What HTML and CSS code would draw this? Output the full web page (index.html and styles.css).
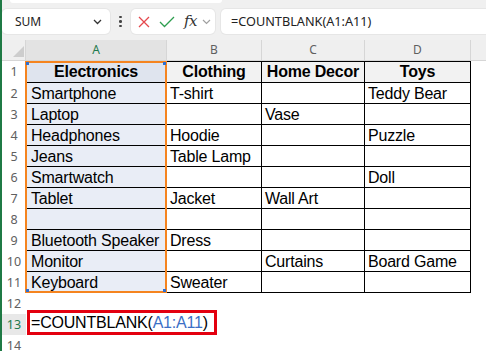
FILE: index.html
```html
<!DOCTYPE html>
<html>
<head>
<meta charset="utf-8">
<link rel="stylesheet" href="styles.css">
</head>
<body>
<div class="app">
  <div class="toolbar">
    <div class="ribbon-edge"></div>
    <div class="fbar">
      <div class="namebox">
        <span class="nb-text">SUM</span>
        <svg class="chev" width="9" height="6" viewBox="0 0 9 6"><path d="M1 1 L4.5 4.5 L8 1" fill="none" stroke="#333" stroke-width="1.3"/></svg>
      </div>
      <div class="dots"><i></i><i></i><i></i></div>
      <div class="fxbox">
        <svg class="ic-x" width="12" height="12" viewBox="0 0 12 12"><path d="M1 1 L11 11 M11 1 L1 11" stroke="#e5484d" stroke-width="1.3" fill="none"/></svg>
        <svg class="ic-ok" width="16" height="12" viewBox="0 0 16 12"><path d="M1 6 L5.5 10.5 L15 1" stroke="#2e9e4f" stroke-width="1.3" fill="none"/></svg>
        <span class="fx">fx</span>
        <svg class="chev2" width="9" height="6" viewBox="0 0 9 6"><path d="M1 1 L4.5 4.5 L8 1" fill="none" stroke="#a0a0a0" stroke-width="1.2"/></svg>
      </div>
      <div class="formula">=COUNTBLANK(A1:A11)</div>
    </div>
  </div>

  <div class="sheet">
    <div class="corner"><svg width="24" height="21" viewBox="0 0 24 21"><path d="M11 17 L22 17 L22 6 Z" fill="#cdcdcd"/></svg></div>
    <div class="ch active">A</div>
    <div class="ch">B</div>
    <div class="ch">C</div>
    <div class="ch">D</div>
    <div class="ch rest"></div>

    <div class="rh">1</div>
    <div class="c a r1">Electronics</div>
    <div class="c r1">Clothing</div>
    <div class="c r1">Home Decor</div>
    <div class="c r1">Toys</div>
    <div class="e"></div>

    <div class="rh">2</div>
    <div class="c a">Smartphone</div>
    <div class="c">T-shirt</div>
    <div class="c"></div>
    <div class="c">Teddy Bear</div>
    <div class="e"></div>

    <div class="rh">3</div>
    <div class="c a">Laptop</div>
    <div class="c"></div>
    <div class="c">Vase</div>
    <div class="c"></div>
    <div class="e"></div>

    <div class="rh">4</div>
    <div class="c a">Headphones</div>
    <div class="c">Hoodie</div>
    <div class="c"></div>
    <div class="c">Puzzle</div>
    <div class="e"></div>

    <div class="rh">5</div>
    <div class="c a">Jeans</div>
    <div class="c">Table Lamp</div>
    <div class="c"></div>
    <div class="c"></div>
    <div class="e"></div>

    <div class="rh">6</div>
    <div class="c a">Smartwatch</div>
    <div class="c"></div>
    <div class="c"></div>
    <div class="c">Doll</div>
    <div class="e"></div>

    <div class="rh">7</div>
    <div class="c a">Tablet</div>
    <div class="c">Jacket</div>
    <div class="c">Wall Art</div>
    <div class="c"></div>
    <div class="e"></div>

    <div class="rh">8</div>
    <div class="c a"></div>
    <div class="c"></div>
    <div class="c"></div>
    <div class="c"></div>
    <div class="e"></div>

    <div class="rh">9</div>
    <div class="c a">Bluetooth Speaker</div>
    <div class="c">Dress</div>
    <div class="c"></div>
    <div class="c"></div>
    <div class="e"></div>

    <div class="rh">10</div>
    <div class="c a">Monitor</div>
    <div class="c"></div>
    <div class="c">Curtains</div>
    <div class="c">Board Game</div>
    <div class="e"></div>

    <div class="rh">11</div>
    <div class="c a">Keyboard</div>
    <div class="c">Sweater</div>
    <div class="c"></div>
    <div class="c"></div>
    <div class="e"></div>

    <div class="rh">12</div>
    <div class="e"></div><div class="e"></div><div class="e"></div><div class="e"></div><div class="e"></div>

    <div class="rh active">13</div>
    <div class="e a13"><span class="editbox">=COUNTBLANK(<span class="ref">A1:A11</span>)</span></div>
    <div class="e"></div><div class="e"></div><div class="e"></div><div class="e"></div>

    <div class="rh">14</div>
    <div class="e"></div><div class="e"></div><div class="e"></div><div class="e"></div><div class="e"></div>

    <div class="sel"><i class="h tl"></i><i class="h tr"></i><i class="h bl"></i><i class="h br"></i></div>
  </div>
</div>
</body>
</html>
```

FILE: styles.css
```css
* { box-sizing: border-box; }
html, body { margin: 0; padding: 0; background: #fff; }
body { width: 486px; height: 351px; overflow: hidden; }

.app {
  border-left: 2px solid #1f7a45;
  height: 351px;
  overflow: hidden;
}

.toolbar {
  height: 40px;
  background: #f0f0f0;
  font-family: "Noto Sans", "Open Sans", sans-serif;
}
.ribbon-edge {
  height: 3px;
  width: 212px;
  margin-left: 8px;
  background: #fff;
  border-radius: 0 0 6px 6px;
}
.fbar {
  display: flex;
  align-items: center;
  height: 25px;
  margin-top: 6px;
}
.namebox {
  width: 108px;
  height: 25px;
  background: #fff;
  border-radius: 5px;
  box-shadow: 0 0 0 1px #e6e6e6;
  display: flex;
  align-items: center;
  padding-left: 13px;
  padding-right: 8px;
}
.nb-text { flex: 1; font-size: 12px; color: #222; }
.chev { display: block; }

.dots {
  margin-left: 9px;
  width: 3px;
  display: flex;
  flex-direction: column;
  gap: 2px;
}
.dots i { display: block; width: 2.5px; height: 2.5px; background: #444; border-radius: 50%; }

.fxbox {
  margin-left: 9px;
  width: 84px;
  height: 25px;
  background: #fff;
  border-radius: 5px;
  box-shadow: 0 0 0 1px #e6e6e6;
  display: flex;
  align-items: center;
  padding-left: 7px;
}
.ic-x { display: block; }
.ic-ok { display: block; margin-left: 9px; }
.fx {
  margin-left: 9px;
  font-family: "DejaVu Serif", "Liberation Serif", serif;
  font-style: italic;
  font-size: 15px;
  color: #333;
  line-height: 1;
  letter-spacing: -0.5px;
}
.chev2 { display: block; margin-left: 5px; }

.formula {
  flex: 1;
  margin-left: 6px;
  height: 25px;
  background: #fff;
  border-radius: 5px 0 0 5px;
  box-shadow: 0 0 0 1px #e6e6e6;
  padding-left: 10px;
  font-size: 12.7px;
  line-height: 25px;
  color: #222;
}

.sheet {
  position: relative;
  display: grid;
  grid-template-columns: 24px 141px 95px 103px 106px 1fr;
  grid-template-rows: 21px 22px repeat(10, 21px) 21px 21px 21px;
}

.corner {
  background: #efefef;
  border-right: 1px solid #d6d6d6;
  border-bottom: 1px solid #d6d6d6;
}
.corner svg { display: block; }

.ch {
  background: #efefef;
  border-right: 1px solid #d6d6d6;
  border-bottom: 1px solid #d6d6d6;
  font-family: "Noto Sans", "Open Sans", sans-serif;
  font-size: 12px;
  color: #5f5f5f;
  text-align: center;
  line-height: 20px;
}
.ch.active { background: #e3e3e3; color: #1e7a4e; }
.ch.rest { border-right: none; }

.rh {
  background: #fff;
  font-family: "Noto Sans", "Open Sans", sans-serif;
  font-size: 12.5px;
  color: #606060;
  text-align: center;
  line-height: 21px;
}
.rh.active { background: #e8e8e8; color: #1e7a4e; }

.c {
  border-right: 1px solid #000;
  border-bottom: 1px solid #000;
  font-family: "Liberation Sans", Arial, sans-serif;
  font-size: 16px;
  letter-spacing: -0.2px;
  color: #000;
  line-height: 20px;
  padding: 1px 0 0 3px;
  white-space: nowrap;
}
.c.a { background: #e9edf6; padding-left: 5px; }
.c.r1 {
  border-top: 1px solid #000;
  background: #f2f2f2;
  font-weight: bold;
  text-align: center;
  padding: 0;
}
.c.a.r1 { background: #dfe4ee; }

.e { background: #fff; }

.a13 { position: relative; }
.editbox {
  position: absolute;
  left: 1px;
  top: -4px;
  height: 25px;
  border: 3px solid #e3000f;
  padding: 0 6px 0 1px;
  white-space: nowrap;
  font-family: "Liberation Sans", Arial, sans-serif;
  font-size: 16px;
  letter-spacing: -0.2px;
  line-height: 19px;
  color: #000;
  background: #fff;
}
.ref { color: #3b6fc6; }

.sel {
  position: absolute;
  left: 23px;
  top: 21px;
  width: 142px;
  height: 232px;
  border: 2px solid #f5841f;
  pointer-events: none;
}
.sel .h {
  position: absolute;
  width: 3px;
  height: 3px;
  background: #2f6fd0;
}
.sel .tl { left: -1px; top: -1px; }
.sel .tr { right: -1px; top: -1px; }
.sel .bl { left: -1px; bottom: -1px; }
.sel .br { right: -1px; bottom: -1px; }
```
